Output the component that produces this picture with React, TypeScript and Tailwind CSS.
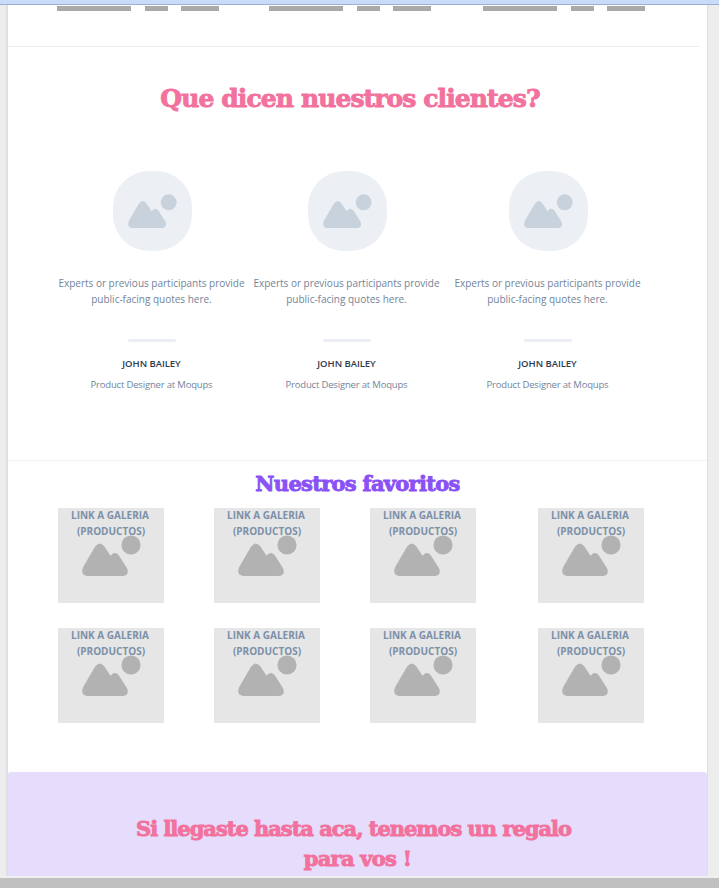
import React from "react";

const slab = "font-['DejaVu_Serif','Liberation_Serif',serif] font-bold [-webkit-text-stroke:0.9px_currentColor]";

function Picture({ className }: { className: string }) {
  return (
    <svg viewBox="0 0 59 41" fill="currentColor" className={className}>
      <path d="M1.2 32 L12.8 12 Q17.8 5 22.8 12 L28.5 20.8 Q32.5 15.3 36.8 20.3 L45.2 33.5 Q47.5 40.8 41 41 H5 Q-2 40 1.2 32 Z" />
      <circle cx="49" cy="10" r="9.6" />
    </svg>
  );
}

function Testimonial({ className = "" }: { className?: string }) {
  return (
    <article className={`flex w-[195px] flex-col items-center text-center text-[10px] text-[#72849a] ${className}`}>
      <div className="flex h-20 w-[79px] items-center justify-center rounded-[36px] bg-[#ecf0f5]">
        <Picture className="mb-px h-[34px] w-[49px] text-[#c8d2dc]" />
      </div>
      <p className="mt-6 pr-0.5 leading-4 tracking-[-0.01px] whitespace-nowrap">
        Experts or previous participants provide
        <br />
        public-facing quotes here.
      </p>
      <div className="mt-[32px] mr-px h-[3px] w-12 rounded-full bg-[#ebeff3]" />
      <h3 className="mt-[14px] pr-0.5 text-[9.5px] leading-4 font-semibold tracking-[-0.05px] text-[#2f3b4d]">JOHN BAILEY</h3>
      <p className="mt-[5px] pr-0.5 text-[9.5px] leading-4 tracking-[-0.18px]">Product Designer at Moqups</p>
    </article>
  );
}

function Product({ className = "" }: { className?: string }) {
  return (
    <a className={`flex h-[95px] w-[106px] flex-col items-center bg-[#e6e6e6] ${className}`}>
      <span className="-mt-px pr-px text-center text-[10px] leading-4 font-bold whitespace-nowrap text-[#7c90a8]">
        <span className="block pr-px">LINK A GALERIA</span>
        <span className="block pl-px">(PRODUCTOS)</span>
      </span>
      <Picture className="-mt-1 h-[41px] w-[59px] text-[#b2b2b2]" />
    </a>
  );
}

function TextBars({ className = "" }: { className?: string }) {
  return (
    <div className={`flex h-[5px] ${className}`}>
      <div className="w-[74px] bg-[#a9a9a9]" />
      <div className="ml-[14px] w-[23px] bg-[#a9a9a9]" />
      <div className="ml-[13px] w-[38px] bg-[#a9a9a9]" />
    </div>
  );
}

export default function App() {
  return (
    <div className="flex h-[888px] w-[719px] flex-col overflow-hidden bg-[#ededed] font-['Open_Sans','Noto_Sans',sans-serif]">
      <div className="h-[5px] shrink-0 border-b border-[#9daecb] bg-[#c9dbf6]" />
      <main className="mr-[11px] ml-1.5 flex h-[871px] flex-col border-r border-l-2 border-[#dfdfdf] bg-white">
        <section className="flex h-[41px] pt-px pl-[49px]">
          <TextBars />
          <TextBars className="ml-[50px]" />
          <TextBars className="ml-[52px]" />
        </section>
        <div className="mr-[7px] h-px bg-[#eeeef3]" />
        <section className="h-[413px]">
          <h2 className={`${slab} pt-8 pr-[15px] text-center text-[25px] leading-10 tracking-[-0.9px] whitespace-nowrap text-[#f2719d]`}>
            Que dicen nuestros clientes?
          </h2>
          <div className="mt-[52px] flex pl-[47px]">
            <Testimonial />
            <Testimonial />
            <Testimonial className="ml-1.5" />
          </div>
        </section>
        <div className="h-px bg-[#eff2f5]" />
        <section className="h-[311px]">
          <h2 className={`${slab} pt-[7px] text-center text-[21px] leading-8 tracking-[-0.7px] whitespace-nowrap text-[#8a51f5]`}>
            Nuestros favoritos
          </h2>
          <div className="mt-2 grid grid-cols-[156px_156px_168px_106px] gap-y-[25px] pl-[50px]">
            {Array.from({ length: 8 }, (_, i) => (
              <Product key={i} />
            ))}
          </div>
        </section>
        <section className="h-[104px] rounded-t-[3px] bg-[#e6dcfb] pt-[42px] pr-2">
          <h2 className={`${slab} text-center text-[21px] leading-[30px] whitespace-nowrap text-[#f2719d]`}>
            <span className="block tracking-[-1.02px]">Si llegaste hasta aca, tenemos un regalo</span>
            <span className="block pl-2 tracking-[-0.75px]">para vos !</span>
          </h2>
        </section>
      </main>
      <div className="h-0.5 shrink-0 bg-[#efefef]" />
      <div className="h-[10px] shrink-0 bg-[#c0c0c0]" />
    </div>
  );
}
